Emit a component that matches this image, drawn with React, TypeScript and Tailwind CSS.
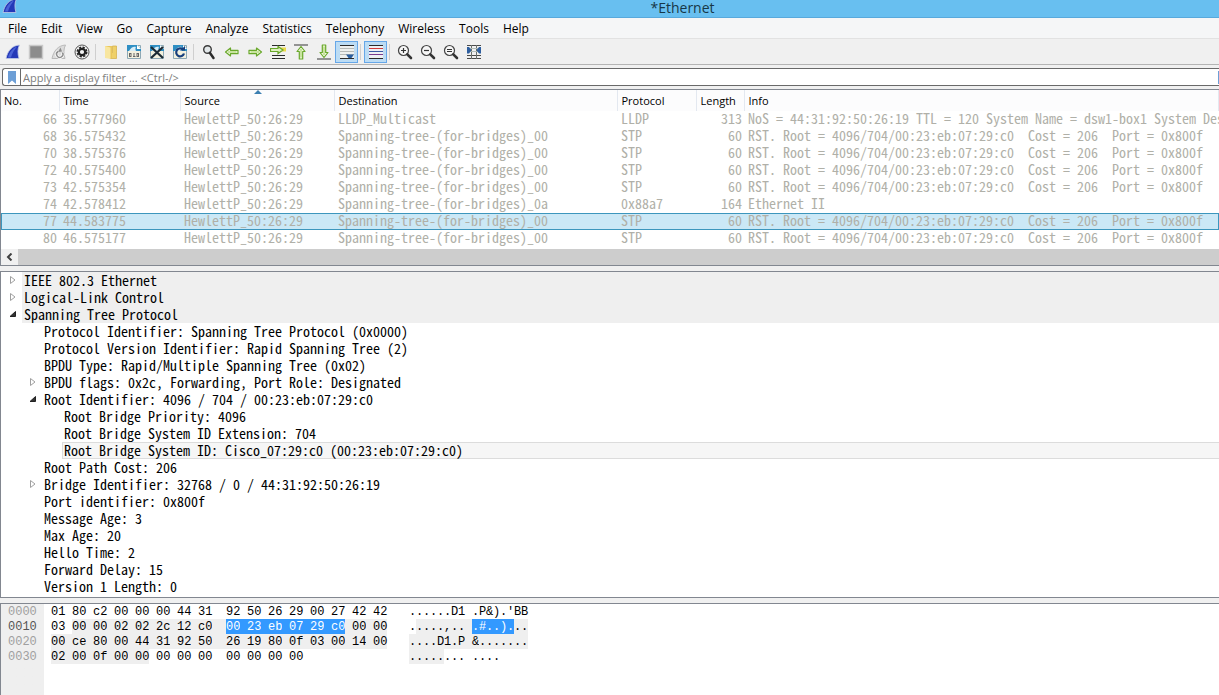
import React from 'react';

type IconProps = { children: React.ReactNode };

const Icon: React.FC<IconProps> = ({ children }) => (
  <svg width="16" height="16" viewBox="0 0 16 16" fill="none" aria-hidden="true">
    {children}
  </svg>
);

const FinIcon = () => (
  <Icon>
    <path d="M1 14.5C2.500 7 7 1.500 14.500 1C12.500 4.500 12.500 9.500 14 14.500Z" fill="#2438b8" stroke="#c3cbe6" strokeWidth="0.8" />
    <path d="M3 13.500C4.500 8 8 4 12 2.500C10 5 7 9 6 13.500Z" fill="#4a63d6" />
  </Icon>
);

const StopIcon = () => (
  <Icon>
    <rect x="1.500" y="1.500" width="13" height="13" fill="#8c8c8c" stroke="#c9c9c9" strokeWidth="1.500" />
  </Icon>
);

const RestartIcon = () => (
  <Icon>
    <path d="M1 14.500C2.500 7 7 1.500 14.500 1C12.500 4.500 12.500 9.500 14 14.500Z" fill="#dcdcdc" stroke="#b9b9b9" />
    <path d="M7 7.500A3.200 3.200 0 1 0 11.500 8.500" stroke="#fff" strokeWidth="3" />
    <path d="M7 7.500A3.200 3.200 0 1 0 11.500 8.500" stroke="#8d8d8d" strokeWidth="1.500" />
    <path d="M7 8L11 7.500L9.500 3.500Z" fill="#8d8d8d" />
  </Icon>
);

const OptionsIcon = () => (
  <Icon>
    <circle cx="8" cy="8" r="7" fill="#f4f4f4" stroke="#555" strokeWidth="1" />
    <circle cx="8" cy="8" r="4.800" stroke="#222" strokeWidth="1.400" strokeDasharray="2.300 1.470" />
    <circle cx="8" cy="8" r="3.200" stroke="#222" strokeWidth="2.200" />
  </Icon>
);

const FolderIcon = () => (
  <Icon>
    <path d="M9.500 2H13.500V14.500H7V8.500H9.500Z" fill="#efd069" stroke="#d2ad45" strokeWidth="0.700" />
    <path d="M2 2H9V14H2Z" fill="#e9c65c" />
    <path d="M2 14V2L7.500 3.500V15Z" fill="#f8e6a0" />
  </Icon>
);

const FilePage = () => (
  <>
    <path d="M1.500 1.500H14.500V14.500H1.500Z" fill="#f3f1df" stroke="#8fa9b5" />
    <path d="M1 1H11L15 5V7H1Z" fill="#2f8fc4" />
    <path d="M3 7C5 3 8 2 10 3C9 4 9.500 6 10 7Z" fill="#d8edf7" />
    <path d="M11 1V5H15Z" fill="#fff" />
  </>
);

const BinaryFileIcon = () => (
  <Icon>
    <FilePage />
    <rect x="3.500" y="9.500" width="1.500" height="3" stroke="#666" />
    <path d="M8 9V13M7 12.500H9.500" stroke="#666" />
    <rect x="11" y="9.500" width="1.500" height="3" stroke="#666" />
  </Icon>
);

const CloseFileIcon = () => (
  <Icon>
    <FilePage />
    <path d="M2 3L14 14M14 3L2 14" stroke="#1c2b35" strokeWidth="2.300" />
  </Icon>
);

const ReloadFileIcon = () => (
  <Icon>
    <FilePage />
    <path d="M11 5.500A4 4 0 1 0 12 9.500" stroke="#173f7c" strokeWidth="2.200" />
    <path d="M8 6.500H13V2Z" fill="#173f7c" />
  </Icon>
);

const FindIcon = () => (
  <Icon>
    <circle cx="6.500" cy="5.500" r="3.800" fill="#e3e8ea" stroke="#3b3b3b" strokeWidth="1.400" />
    <path d="M8.800 8.800L12.500 14" stroke="#2b2b2b" strokeWidth="2.500" strokeLinecap="round" />
  </Icon>
);

const arrow = 'M1.500 8L6.500 4V6.300H14V9.700H6.500V12Z';

const GreenArrow: React.FC<{ turn: string }> = ({ turn }) => (
  <g transform={turn}>
    <path d={arrow} fill="#f1f8de" stroke="#69a82b" strokeWidth="1.200" strokeLinejoin="round" />
    <path d="M4 8H12.500" stroke="#9fcf5f" strokeWidth="1" />
  </g>
);

const PreviousIcon = () => (
  <Icon>
    <GreenArrow turn="rotate(0 8 8)" />
  </Icon>
);

const NextIcon = () => (
  <Icon>
    <GreenArrow turn="rotate(180 8 8)" />
  </Icon>
);

const GoToIcon = () => (
  <Icon>
    <path d="M2 1.500H15M2 11.500H15M2 14.500H15" stroke="#2b2b2b" />
    <path d="M9 5.500H16" stroke="#ecd94a" strokeWidth="4" />
    <path d="M0.500 4.500H8V2.500L13 6L8 9.500V7.500H0.500Z" fill="#dff0c0" stroke="#69a82b" strokeWidth="1.200" />
  </Icon>
);

const FirstIcon = () => (
  <Icon>
    <path d="M1 1H15" stroke="#555" strokeWidth="1.200" />
    <g transform="translate(0 1)">
      <GreenArrow turn="rotate(90 8 8)" />
    </g>
  </Icon>
);

const LastIcon = () => (
  <Icon>
    <path d="M1 15H15" stroke="#555" strokeWidth="1.200" />
    <g transform="translate(0 -1)">
      <GreenArrow turn="rotate(270 8 8)" />
    </g>
  </Icon>
);

const AutoScrollIcon = () => (
  <Icon>
    <rect x="1" y="1" width="14" height="14" fill="#eef0ee" />
    <path d="M1 1.500H15M1 14.500H15" stroke="#2b2b2b" />
    <path d="M1 4.500H15M1 7.500H15M1 10.500H15" stroke="#b7bab7" />
    <path d="M7 10.500H15L12.500 14H9.500Z" fill="#2b5f9f" />
  </Icon>
);

const ColorizeIcon = () => (
  <Icon>
    <rect x="1" y="1" width="14" height="14" fill="#eef0f4" />
    <path d="M1 1.500H15" stroke="#2b2b2b" />
    <path d="M1 4.500H15" stroke="#d23b3b" />
    <path d="M1 7.500H15" stroke="#3a5aa6" />
    <path d="M1 10.500H15" stroke="#7a3b8f" />
    <path d="M1 14.500H15" stroke="#2b2b2b" />
  </Icon>
);

const ZoomIcon: React.FC<{ sign: string }> = ({ sign }) => (
  <Icon>
    <circle cx="6.500" cy="6.500" r="5" fill="#f6f6f6" stroke="#444" strokeWidth="1.200" />
    <path d={sign} stroke="#333" strokeWidth="1.200" />
    <path d="M10.300 10.300L14 14" stroke="#333" strokeWidth="2.600" strokeLinecap="round" />
  </Icon>
);

const ResizeIcon = () => (
  <Icon>
    <path d="M1 1.500H15M1 11.500H15M1 14.500H15" stroke="#4a4a4a" />
    <path d="M5.500 1V15M10.500 1V15" stroke="#6a706c" />
    <path d="M1 4.500H15M1 7.500H15" stroke="#b4bdb8" />
    <path d="M1 3H3L5 5.500V7L3 9.500H1ZM15 3H13L11 5.500V7L13 9.500H15Z" fill="#2f5f9f" />
  </Icon>
);

interface Tool {
  label: string;
  icon: React.ReactNode;
  active?: boolean;
}

const toolGroups: Tool[][] = [
  [
    { label: 'Start capture', icon: <FinIcon /> },
    { label: 'Stop capture', icon: <StopIcon /> },
    { label: 'Restart capture', icon: <RestartIcon /> },
    { label: 'Capture options', icon: <OptionsIcon /> },
  ],
  [
    { label: 'Open file', icon: <FolderIcon /> },
    { label: 'Save file', icon: <BinaryFileIcon /> },
    { label: 'Close file', icon: <CloseFileIcon /> },
    { label: 'Reload file', icon: <ReloadFileIcon /> },
  ],
  [
    { label: 'Find packet', icon: <FindIcon /> },
    { label: 'Previous packet', icon: <PreviousIcon /> },
    { label: 'Next packet', icon: <NextIcon /> },
    { label: 'Go to packet', icon: <GoToIcon /> },
    { label: 'First packet', icon: <FirstIcon /> },
    { label: 'Last packet', icon: <LastIcon /> },
    { label: 'Auto scroll', icon: <AutoScrollIcon />, active: true },
  ],
  [{ label: 'Colorize', icon: <ColorizeIcon />, active: true }],
  [
    { label: 'Zoom in', icon: <ZoomIcon sign="M4 6.500H9M6.500 4V9" /> },
    { label: 'Zoom out', icon: <ZoomIcon sign="M4 6.500H9" /> },
    { label: 'Normal size', icon: <ZoomIcon sign="M4 5.500H9M4 7.500H9" /> },
    { label: 'Resize columns', icon: <ResizeIcon /> },
  ],
];

const menus = ['File', 'Edit', 'View', 'Go', 'Capture', 'Analyze', 'Statistics', 'Telephony', 'Wireless', 'Tools', 'Help'];

const rst = 'RST. Root = 4096/704/00:23:eb:07:29:c0  Cost = 206  Port = 0x800f';
const bridges = 'Spanning-tree-(for-bridges)_00';

const packets = [
  { no: 66, time: '35.577960', dest: 'LLDP_Multicast', proto: 'LLDP', len: 313, info: 'NoS = 44:31:92:50:26:19 TTL = 120 System Name = dsw1-box1 System Des' },
  { no: 68, time: '36.575432', dest: bridges, proto: 'STP', len: 60, info: rst },
  { no: 70, time: '38.575376', dest: bridges, proto: 'STP', len: 60, info: rst },
  { no: 72, time: '40.575400', dest: bridges, proto: 'STP', len: 60, info: rst },
  { no: 73, time: '42.575354', dest: bridges, proto: 'STP', len: 60, info: rst },
  { no: 74, time: '42.578412', dest: 'Spanning-tree-(for-bridges)_0a', proto: '0x88a7', len: 164, info: 'Ethernet II' },
  { no: 77, time: '44.583775', dest: bridges, proto: 'STP', len: 60, info: rst },
  { no: 80, time: '46.575177', dest: bridges, proto: 'STP', len: 60, info: rst },
];

const selectedPacket = 77;

interface TreeRow {
  depth: 0 | 1 | 2;
  text: string;
  open?: boolean;
  selected?: boolean;
}

const tree: TreeRow[] = [
  { depth: 0, text: 'IEEE 802.3 Ethernet', open: false },
  { depth: 0, text: 'Logical-Link Control', open: false },
  { depth: 0, text: 'Spanning Tree Protocol', open: true },
  { depth: 1, text: 'Protocol Identifier: Spanning Tree Protocol (0x0000)' },
  { depth: 1, text: 'Protocol Version Identifier: Rapid Spanning Tree (2)' },
  { depth: 1, text: 'BPDU Type: Rapid/Multiple Spanning Tree (0x02)' },
  { depth: 1, text: 'BPDU flags: 0x2c, Forwarding, Port Role: Designated', open: false },
  { depth: 1, text: 'Root Identifier: 4096 / 704 / 00:23:eb:07:29:c0', open: true },
  { depth: 2, text: 'Root Bridge Priority: 4096' },
  { depth: 2, text: 'Root Bridge System ID Extension: 704' },
  { depth: 2, text: 'Root Bridge System ID: Cisco_07:29:c0 (00:23:eb:07:29:c0)', selected: true },
  { depth: 1, text: 'Root Path Cost: 206' },
  { depth: 1, text: 'Bridge Identifier: 32768 / 0 / 44:31:92:50:26:19', open: false },
  { depth: 1, text: 'Port identifier: 0x800f' },
  { depth: 1, text: 'Message Age: 3' },
  { depth: 1, text: 'Max Age: 20' },
  { depth: 1, text: 'Hello Time: 2' },
  { depth: 1, text: 'Forward Delay: 15' },
  { depth: 1, text: 'Version 1 Length: 0' },
];

const indents = ['pl-[3px]', 'pl-[23px]', 'pl-[43px]'];

const dump = [
  { offset: '0000', hex: '01 80 c2 00 00 00 44 31 92 50 26 29 00 27 42 42', ascii: "......D1.P&).'BB" },
  { offset: '0010', hex: '03 00 00 02 02 2c 12 c0 00 23 eb 07 29 c0 00 00', ascii: '.....,...#..)...' },
  { offset: '0020', hex: '00 ce 80 00 44 31 92 50 26 19 80 0f 03 00 14 00', ascii: '....D1.P&.......' },
  { offset: '0030', hex: '02 00 0f 00 00 00 00 00 00 00 00 00', ascii: '............' },
];

// Byte ranges of the protocol and of the selected field, end exclusive
const protocolRange = [17, 53];
const fieldRange = [24, 30];

const inRange = (i: number, range: number[]) => i >= range[0] && i < range[1];

const byteColor = (i: number) => {
  if (inRange(i, fieldRange)) return 'bg-[#3399ff] text-white';
  if (inRange(i, protocolRange)) return 'bg-[#efefef]';
  return '';
};

// The space after a byte is shaded only when the next byte has the same shade
const gapColor = (i: number) => {
  if (i % 16 === 15) return '';
  if (inRange(i, fieldRange) && inRange(i + 1, fieldRange)) return 'bg-[#3399ff]';
  if (inRange(i, protocolRange) && inRange(i + 1, protocolRange)) return 'bg-[#efefef]';
  return '';
};

const HexRow: React.FC<{ row: number }> = ({ row }) => {
  const { offset, hex, ascii } = dump[row];
  return (
    <div className="flex h-[15px]">
      <span className={`w-[43px] pl-[7px] ${row === 1 ? 'text-[#555]' : 'text-[#a0a0a0]'}`}>{offset}</span>
      <div className="ml-[7px] flex w-[358px]">
        {hex.split(' ').map((byte, i) => (
          <React.Fragment key={i}>
            <span className={`w-[14px] ${byteColor(row * 16 + i)}`}>{byte}</span>
            <span className={`${i === 7 ? 'w-[14px]' : 'w-[7px]'} ${gapColor(row * 16 + i)}`} />
          </React.Fragment>
        ))}
      </div>
      <div className="flex">
        {ascii.split('').map((char, i) => (
          <React.Fragment key={i}>
            <span className={`w-[7px] ${byteColor(row * 16 + i)}`}>{char}</span>
            {i === 7 && <span className={`w-[7px] ${gapColor(row * 16 + i)}`} />}
          </React.Fragment>
        ))}
      </div>
    </div>
  );
};

const Expander: React.FC<{ open?: boolean }> = ({ open }) => {
  if (open === undefined) return <span className="w-[18px] shrink-0" />;
  return (
    <button type="button" aria-label={open ? 'Collapse' : 'Expand'} className="flex h-[15px] w-[18px] shrink-0 items-center pl-1">
      <svg width="10" height="10" viewBox="0 0 10 10" aria-hidden="true">
        {open ? (
          <path d="M7.500 2.500V7.500H2Z" fill="#333" stroke="#222" />
        ) : (
          <path d="M2.500 1.500L7 5L2.500 8.500Z" fill="#fff" stroke="#a0a0a0" />
        )}
      </svg>
    </button>
  );
};

const headCell = 'h-[21px] border-r border-[#e3e8f0] pt-[2px] pl-1 text-left font-normal whitespace-nowrap first:pl-[3px]';

const App: React.FC = () => {
  return (
    <div className="flex min-h-screen flex-col overflow-hidden bg-[#f0f0f0] font-['Open_Sans','Noto_Sans',sans-serif] text-xs text-black">
      <header className="flex h-[18px] items-start border-b border-[#58a9dc] bg-[#68bff0]">
        <div className="-mt-[2px] w-[60px] pl-[2px]">
          <FinIcon />
        </div>
        <h1 className="flex-1 pr-[60px] pl-[146px] text-center text-sm leading-4 text-[#173747]">*Ethernet</h1>
      </header>

      <nav className="flex h-[21px] items-center border-b border-[#e2e2e2] bg-[#f5f6f7] pt-[2px] pl-px">
        {menus.map((menu) => (
          <button key={menu} type="button" className="px-[7px]">
            {menu}
          </button>
        ))}
      </nav>

      <div className="flex h-[26px] items-center border-b border-[#b4b4b4] bg-[#f0f0f0] pl-px">
        {toolGroups.map((group, g) => (
          <React.Fragment key={g}>
            {g > 0 && <span className="mr-[3px] ml-[2px] h-4 w-px bg-[#cfcfcf]" />}
            {group.map((tool) => (
              <button
                key={tool.label}
                type="button"
                aria-label={tool.label}
                className={`flex h-[22px] w-[23px] items-center justify-center ${tool.active ? 'border border-[#66a7e8] bg-[#bcdcf4]' : ''}`}
              >
                {tool.icon}
              </button>
            ))}
          </React.Fragment>
        ))}
      </div>

      <div className="mt-[3px] ml-[2px] flex h-[18px] items-center rounded-l-[3px] border border-r-0 border-[#696969] bg-white">
        <button type="button" aria-label="Filter bookmarks" className="flex h-full w-[18px] items-center justify-center border-r border-[#696969]">
          <svg width="8" height="13" viewBox="0 0 8 13" aria-hidden="true">
            <path d="M0 0H8V13L4 9.500L0 13Z" fill="#6d9fd6" />
          </svg>
        </button>
        <input
          type="text"
          aria-label="Display filter"
          placeholder="Apply a display filter ... &lt;Ctrl-/&gt;"
          className="h-full flex-1 pl-[2px] text-[11px] outline-none placeholder:text-[#808080]"
        />
        <span className="h-[13px] w-px bg-[#6d9fd6]" />
      </div>

      <section className="mt-[3px] border border-r-0 border-[#828790] bg-white">
        <table className="w-full table-fixed border-collapse">
          <colgroup>
            <col className="w-[58px]" />
            <col className="w-[121px]" />
            <col className="w-[154px]" />
            <col className="w-[283px]" />
            <col className="w-[79px]" />
            <col className="w-[48px]" />
            <col />
          </colgroup>
          <thead className="bg-[#fcfcfd] text-[11px]">
            <tr>
              <th className={headCell}>No.</th>
              <th className={headCell}>Time</th>
              <th className={`relative ${headCell}`}>
                Source
                <svg className="absolute top-0 left-[73px]" width="8" height="4" viewBox="0 0 8 4" aria-hidden="true">
                  <path d="M4 0L8 4H0Z" fill="#3c7fb1" />
                </svg>
              </th>
              <th className={headCell}>Destination</th>
              <th className={headCell}>Protocol</th>
              <th className={headCell}>Length</th>
              <th className={headCell}>Info</th>
            </tr>
          </thead>
          <tbody className="font-['Noto_Sans_Mono_CJK_SC','Liberation_Mono',monospace] text-sm leading-[15px] whitespace-pre text-[#b0b0a8]">
            {packets.map((p) => (
              <tr key={p.no} className={`h-[17px] align-top ${p.no === selectedPacket ? 'bg-[#cbe8f6] outline outline-offset-[-1px] outline-[#3c96bd]' : ''}`}>
                <td className="pr-[2px] text-right">{p.no}</td>
                <td className="pl-1">{p.time}</td>
                <td className="pl-1">HewlettP_50:26:29</td>
                <td className="pl-1">{p.dest}</td>
                <td className="pl-1">{p.proto}</td>
                <td className="pr-[2px] text-right">{p.len}</td>
                <td className="pl-1">{p.info}</td>
              </tr>
            ))}
          </tbody>
        </table>
        <div className="mt-[2px] flex h-4 bg-[#cdcdcd]">
          <button type="button" aria-label="Scroll left" className="flex w-[17px] items-center justify-center bg-[#f0f0f0]">
            <svg width="7" height="8" viewBox="0 0 7 8" fill="none" aria-hidden="true">
              <path d="M5.500 0.500L2 4L5.500 7.500" stroke="#404040" strokeWidth="2" />
            </svg>
          </button>
        </div>
      </section>

      <section className="mt-[5px] border border-r-0 border-[#828790] bg-white pb-[2px] font-['Noto_Sans_Mono_CJK_SC','Liberation_Mono',monospace] text-sm">
        {tree.map((row) => (
          <div key={row.text} className={`flex h-[17px] leading-[17px] ${indents[row.depth]}`}>
            <Expander open={row.open} />
            <span
              className={`flex-1 whitespace-pre ${row.depth === 0 ? 'bg-[#efefef] pl-[2px]' : row.selected ? 'border border-r-0 border-[#dcdcdc] bg-[#f6f6f6] pl-px leading-[15px]' : 'pl-[2px]'}`}
            >
              {row.text}
            </span>
          </div>
        ))}
      </section>

      <section className="mt-[5px] flex-1 border-t border-l border-[#828790] bg-white bg-linear-to-r from-[#efefef] from-[43px] to-white to-[43px] font-['Liberation_Mono',monospace] leading-[17px] whitespace-pre">
        {dump.map((line, i) => (
          <HexRow key={line.offset} row={i} />
        ))}
      </section>
    </div>
  );
};

export default App;
